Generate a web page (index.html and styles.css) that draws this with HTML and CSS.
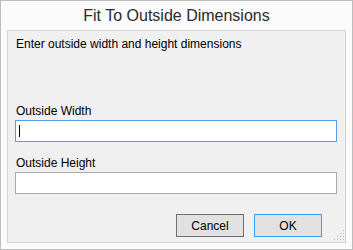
FILE: index.html
```html
<!DOCTYPE html>
<html lang="en">
<head>
    <meta charset="UTF-8">
    <meta name="viewport" content="width=device-width, initial-scale=1.0">
    <title>Fit To Outside Dimensions</title>
    <link rel="stylesheet" href="styles.css">
</head>
<body>
    <div class="dialog">
        <div class="dialog-title">Fit To Outside Dimensions</div>

        <div class="dialog-panel">
            <p class="intro">Enter outside width and height dimensions</p>

            <label class="field-label">Outside Width</label>
            <div class="text-box is-focused"><span class="caret"></span></div>

            <label class="field-label">Outside Height</label>
            <div class="text-box"></div>

            <div class="button-row">
                <button class="btn">Cancel</button>
                <button class="btn btn-default">OK</button>
            </div>

            <svg class="grip" width="12" height="12" viewBox="0 0 12 12">
                <g fill="#b9b9b9">
                    <rect x="10" y="1" width="1" height="1"/>
                    <rect x="7" y="4" width="1" height="1"/>
                    <rect x="10" y="4" width="1" height="1"/>
                    <rect x="4" y="7" width="1" height="1"/>
                    <rect x="7" y="7" width="1" height="1"/>
                    <rect x="10" y="7" width="1" height="1"/>
                    <rect x="1" y="10" width="1" height="1"/>
                    <rect x="4" y="10" width="1" height="1"/>
                    <rect x="7" y="10" width="1" height="1"/>
                    <rect x="10" y="10" width="1" height="1"/>
                </g>
            </svg>
        </div>
    </div>
</body>
</html>
```

FILE: styles.css
```css
* {
	box-sizing: border-box;
}

body {
	margin: 0;
	background-color: #fff;
	font-family: "Liberation Sans", Arial, sans-serif;
	font-size: 12px;
	color: #000;
}

.dialog {
	display: flex;
	flex-direction: column;
	width: 353px;
	height: 250px;
	border: 1px solid #bdbdbd;
	background-color: #fbfbfb;
}

.dialog-title {
	height: 29px;
	line-height: 30px;
	text-align: center;
	font-size: 16px;
	color: #2b2b2b;
}

.dialog-panel {
	position: relative;
	display: flex;
	flex-direction: column;
	height: 213px;
	margin: 0 6px;
	padding: 5px 8px 0 7px;
	border: 1px solid #d4d4d4;
	background-color: #f0f0f0;
}

.intro {
	margin: 0 0 0 1px;
	line-height: 16px;
}

.field-label {
	margin: 0 0 0 1px;
	line-height: 16px;
}

.intro + .field-label {
	margin-top: 51px;
}

.text-box {
	display: flex;
	align-items: center;
	height: 22px;
	margin-top: 1px;
	margin-bottom: 13px;
	padding-left: 3px;
	border: 1px solid #ababab;
	background-color: #fff;
}

.text-box.is-focused {
	border-color: #5a9de2;
}

.caret {
	width: 1px;
	height: 12px;
	background-color: #000;
}

.button-row {
	display: flex;
	justify-content: flex-end;
	gap: 10px;
	margin-top: 7px;
	margin-right: 15px;
}

.btn {
	width: 68px;
	height: 23px;
	padding: 0;
	border: 1px solid #707070;
	background-color: #e1e1e1;
	font-family: inherit;
	font-size: 12px;
	color: #000;
}

.btn-default {
	border-color: #3c9bff;
}

.grip {
	position: absolute;
	right: 0;
	bottom: 1px;
}
```
